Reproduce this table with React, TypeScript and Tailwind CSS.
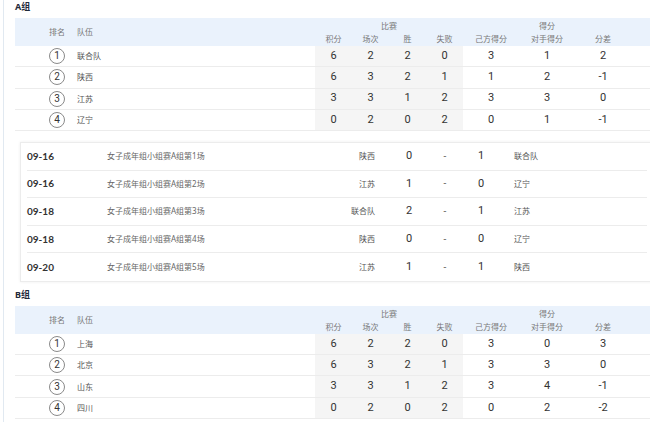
import React from 'react';

type Standing = {
  rank: number;
  team: string;
  stats: [number, number, number, number];
  scores: [number, number, number];
};

type Match = {
  date: string;
  title: string;
  home: string;
  homeScore: number;
  awayScore: number;
  away: string;
};

const groupA: Standing[] = [
  { rank: 1, team: '联合队', stats: [6, 2, 2, 0], scores: [3, 1, 2] },
  { rank: 2, team: '陕西', stats: [6, 3, 2, 1], scores: [1, 2, -1] },
  { rank: 3, team: '江苏', stats: [3, 3, 1, 2], scores: [3, 3, 0] },
  { rank: 4, team: '辽宁', stats: [0, 2, 0, 2], scores: [0, 1, -1] },
];

const groupB: Standing[] = [
  { rank: 1, team: '上海', stats: [6, 2, 2, 0], scores: [3, 0, 3] },
  { rank: 2, team: '北京', stats: [6, 3, 2, 1], scores: [3, 3, 0] },
  { rank: 3, team: '山东', stats: [3, 3, 1, 2], scores: [3, 4, -1] },
  { rank: 4, team: '四川', stats: [0, 2, 0, 2], scores: [0, 2, -2] },
];

const matchesA: Match[] = [
  { date: '09-16', title: '女子成年组小组赛A组第1场', home: '陕西', homeScore: 0, awayScore: 1, away: '联合队' },
  { date: '09-16', title: '女子成年组小组赛A组第2场', home: '江苏', homeScore: 1, awayScore: 0, away: '辽宁' },
  { date: '09-18', title: '女子成年组小组赛A组第3场', home: '联合队', homeScore: 2, awayScore: 1, away: '江苏' },
  { date: '09-18', title: '女子成年组小组赛A组第4场', home: '陕西', homeScore: 0, awayScore: 0, away: '辽宁' },
  { date: '09-20', title: '女子成年组小组赛A组第5场', home: '江苏', homeScore: 1, awayScore: 1, away: '陕西' },
];

const cjk = "font-['Noto_Sans','Noto_Sans_CJK_SC',sans-serif]";
const num = "font-['Roboto','Noto_Sans_CJK_SC',sans-serif]";

const StandingsTable: React.FC<{ title: string; rows: Standing[] }> = ({ title, rows }) => (
  <div className="ml-[11px]">
    <div className={`h-[18px] text-[9px] leading-[14px] font-bold text-[#1f2a3a] ${cjk}`}>{title}</div>
    <div className={`flex h-[28px] bg-[#eaf2fc] text-[8px] text-[#777] ${cjk}`}>
      <div className="w-[60px] flex items-center justify-end pr-[10px]">排名</div>
      <div className="w-[240px] flex items-center pl-[2px]">队伍</div>
      <div className="w-[148px] flex flex-col pt-[1px]">
        <div className="h-[13px] leading-[13px] text-center">比赛</div>
        <div className="flex h-[13px] leading-[13px]">
          {['积分', '场次', '胜', '失败'].map((h) => (
            <div key={h} className="w-[37px] text-center">{h}</div>
          ))}
        </div>
      </div>
      <div className="w-[168px] flex flex-col pt-[1px]">
        <div className="h-[13px] leading-[13px] text-center">得分</div>
        <div className="flex h-[13px] leading-[13px]">
          {['己方得分', '对手得分', '分差'].map((h) => (
            <div key={h} className="w-[56px] text-center">{h}</div>
          ))}
        </div>
      </div>
      <div className="flex-1" />
    </div>
    {rows.map((r) => (
      <div key={r.rank} className="flex h-[21.25px] border-b border-[#ececec] text-[#333]">
        <div className="w-[60px] flex items-center justify-end pr-[10px]">
          <div className={`w-[16px] h-[16px] rounded-full border border-[#8a8a8a] flex items-center justify-center text-[10px] leading-none ${num}`}>
            {r.rank}
          </div>
        </div>
        <div className={`w-[240px] flex items-center pl-[2px] text-[8px] text-[#555] ${cjk}`}>{r.team}</div>
        {r.stats.map((s, i) => (
          <div key={i} className={`w-[37px] bg-[#f5f5f5] flex items-center justify-center text-[11px] ${num}`}>{s}</div>
        ))}
        {r.scores.map((s, i) => (
          <div key={i} className={`w-[56px] flex items-center justify-center text-[11px] ${num}`}>{s}</div>
        ))}
        <div className="flex-1" />
      </div>
    ))}
  </div>
);

const MatchList: React.FC<{ matches: Match[] }> = ({ matches }) => (
  <div className="ml-[16px] mr-[-4px] mt-[11px] border border-[#ececec] shadow-[0_0_3px_rgba(0,0,0,0.07)] bg-white">
    {matches.map((m, i) => (
      <div key={i} className="px-[6px]">
        <div className={`flex items-center h-[27.6px] ${i < matches.length - 1 ? 'border-b border-[#ececec]' : ''}`}>
          <div className="w-[80px] text-[10px] font-bold text-[#333] font-['Lato','Noto_Sans',sans-serif]">{m.date}</div>
          <div className={`w-[200px] text-[8px] text-[#666] ${cjk}`}>{m.title}</div>
          <div className={`w-[68px] text-right text-[8px] text-[#555] ${cjk}`}>{m.home}</div>
          <div className={`ml-[16px] w-[36px] text-center text-[11px] text-[#333] ${num}`}>{m.homeScore}</div>
          <div className={`w-[36px] text-center text-[10px] text-[#666] ${num}`}>-</div>
          <div className={`w-[36px] text-center text-[11px] text-[#333] ${num}`}>{m.awayScore}</div>
          <div className={`pl-[15px] text-[8px] text-[#555] ${cjk}`}>{m.away}</div>
        </div>
      </div>
    ))}
  </div>
);

export default function App() {
  return (
    <div className="w-[650px] h-[422px] overflow-hidden bg-white">
      <div className="ml-[3px] border-l border-[#e1e9f1] min-h-[422px]">
        <StandingsTable title="A组" rows={groupA} />
        <MatchList matches={matchesA} />
        <div className="h-[6px]" />
        <StandingsTable title="B组" rows={groupB} />
      </div>
    </div>
  );
}
